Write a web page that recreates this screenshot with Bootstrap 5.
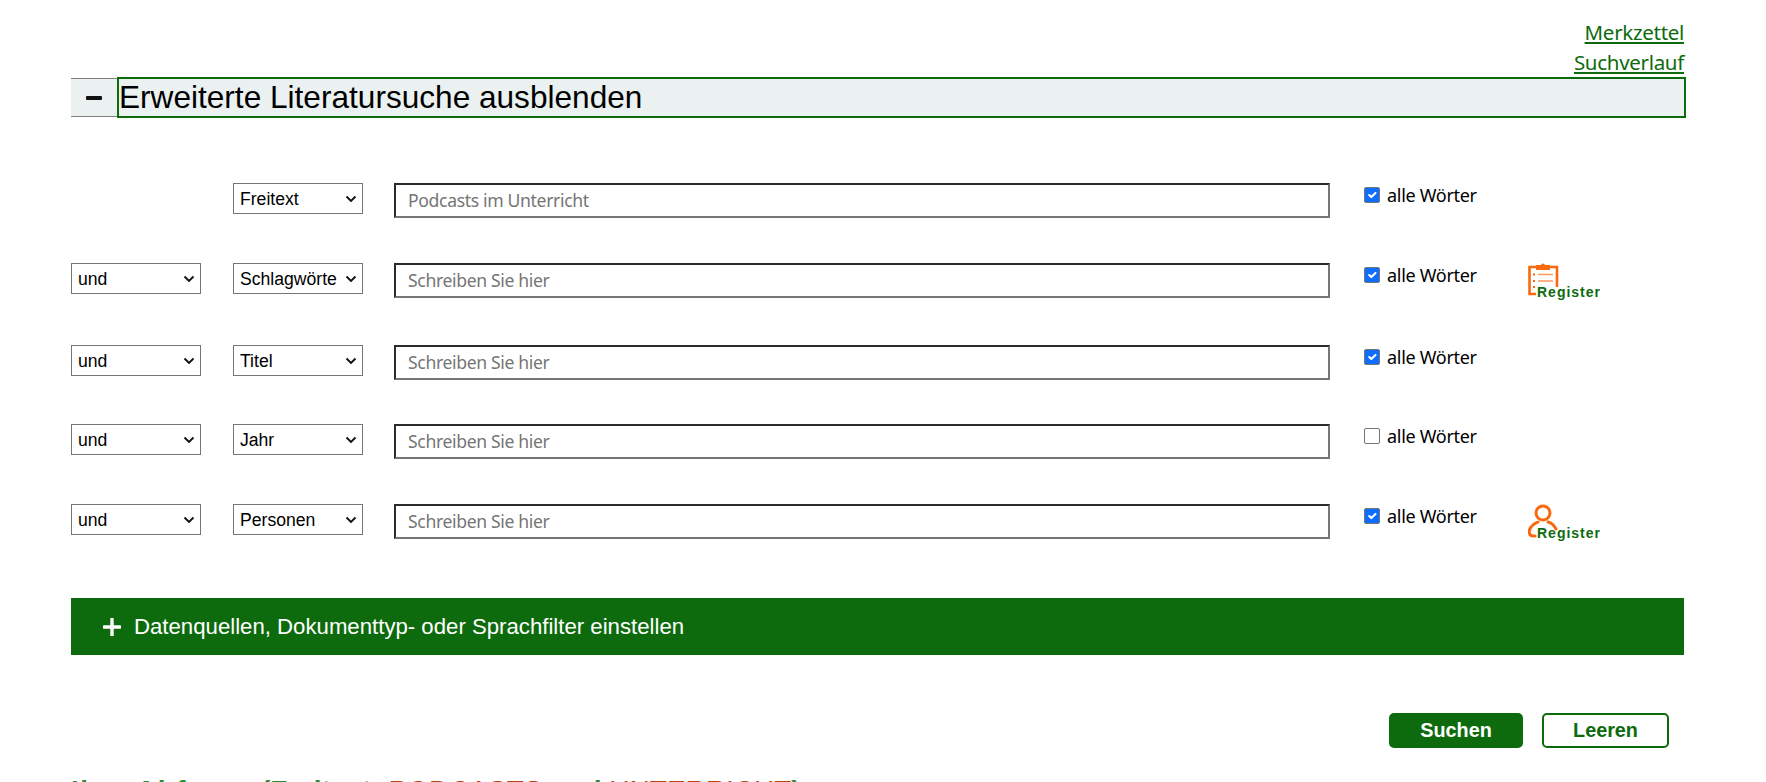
<!DOCTYPE html>
<html lang="de">
<head>
  <meta charset="UTF-8" />
  <meta name="viewport" content="width=device-width, initial-scale=1.0" />
  <title>Literatursuche</title>
  <link href="https://cdn.jsdelivr.net/npm/bootstrap@5.3.3/dist/css/bootstrap.min.css" rel="stylesheet" />
  <script src="https://cdn.jsdelivr.net/npm/bootstrap@5.3.3/dist/js/bootstrap.bundle.min.js"></script>
  <style>
    html, body { height: 782px; overflow: hidden; }
    body { font-family: "Noto Sans", sans-serif; color: #000; background: #fff; }
    .page-wrap { padding: 17px 82px 0 71px; }
    .top-links { height: 60px; font-size: 20.5px; line-height: 30px; letter-spacing: -.3px; }
    .top-links a { color: #0d6b0d; display: block; height: 30px; }
    .toggle-head { height: 41px; margin-right: -2px; }
    .toggle-btn { width: 46px; margin: 1px 0; background: #ebf1f1; border-top: 1px solid #808080; border-bottom: 1px solid #808080; }
    .toggle-btn span { width: 16px; height: 4px; background: #111; border-radius: 1px; }
    .toggle-title { background: #ebf1f1; border: 2px solid #0d6b0d; font: 31.6px/37px "Liberation Sans", sans-serif; }
    .search-rows { padding-top: 65px; }
    .search-row { height: 31px; margin-top: 49px; }
    .search-row:first-child { margin-top: 0; }
    .row-titel { margin-top: 51px; }
    .row-jahr { margin-top: 48px; }
    .sel-gap { width: 162px; flex: none; }
    .sel-box { width: 130px; height: 31px; flex: none; padding: 0 0 0 6px; border: 1px solid #767676; border-radius: 0; font: 17.6px "Liberation Sans", sans-serif; color: #000; background-image: url("data:image/svg+xml,%3csvg xmlns='http://www.w3.org/2000/svg' viewBox='0 0 12 8'%3e%3cpath fill='none' stroke='%23111' stroke-width='1.9' d='M1.5 1.5 6 6l4.5-4.5'/%3e%3c/svg%3e"); background-position: right 5px center; background-size: 12px 8px; }
    .sel-link { margin-right: 32px; }
    .sel-field { margin-right: 31px; }
    .txt-input { width: 936px; height: 35px; flex: none; padding: 0 12px 2px; border-width: 2px; border-style: solid; border-color: #2b2b2b #767676 #767676 #2b2b2b; border-radius: 0; font-size: 17.6px; letter-spacing: -.35px; }
    .txt-input::placeholder { color: #757575; opacity: 1; }
    .word-check { margin-left: 34px; width: 164px; margin-top: 1px; font-size: 18px; line-height: 22px; letter-spacing: -.3px; flex: none; }
    .word-check .form-check-input { width: 16px; height: 16px; margin: 0 7px 0 0; border-color: #767676; border-radius: 2px; flex: none; }
    .reg-link { position: relative; width: 76px; height: 40px; flex: none; }
    .reg-link svg { display: block; }
    .reg-link b { position: absolute; left: 9px; top: 21px; font: bold 14px/16px "Liberation Sans", sans-serif; letter-spacing: 1px; color: #0d6b0d; }
    .filter-bar { margin-top: 63px; height: 57px; padding-left: 32px; background: #0d6b0d; color: #fff; font: 22.2px "Liberation Sans", sans-serif; }
    .filter-bar svg { margin-right: 13px; }
    .action-row { margin-top: 58px; padding-right: 15px; }
    .act-btn { height: 35px; padding: 0; border-radius: 5px; font: bold 19.8px/1 "Liberation Sans", sans-serif; border: 2px solid #0d6b0d; }
    .act-search { width: 134px; background: #0d6b0d; color: #fff; margin-right: 19px; }
    .act-clear { width: 127px; background: #fff; color: #0d6b0d; }
    .query-title { margin-top: 28px; font: bold 28px/30px "Liberation Sans", sans-serif; color: #2e8b2e; white-space: nowrap; }
    .query-title span { letter-spacing: 1.4px; }
    .query-title em { font-style: normal; font-weight: 400; color: #b8430f; }
  </style>
</head>
<body>
  <div class="page-wrap">
    <div class="top-links text-end">
      <a href="#">Merkzettel</a>
      <a href="#">Suchverlauf</a>
    </div>

    <div class="toggle-head d-flex">
      <div class="toggle-btn d-flex align-items-center justify-content-center"><span></span></div>
      <div class="toggle-title flex-grow-1">Erweiterte Literatursuche ausblenden</div>
    </div>

    <div class="search-rows">
      <div class="search-row d-flex align-items-start">
        <div class="sel-gap"></div>
        <select class="form-select sel-box sel-field"><option>Freitext</option></select>
        <input type="text" class="form-control txt-input" placeholder="Podcasts im Unterricht" />
        <label class="word-check d-flex align-items-center"><input class="form-check-input" type="checkbox" checked />alle Wörter</label>
      </div>
      <div class="search-row d-flex align-items-start">
        <select class="form-select sel-box sel-link"><option>und</option></select>
        <select class="form-select sel-box sel-field"><option>Schlagwörte</option></select>
        <input type="text" class="form-control txt-input" placeholder="Schreiben Sie hier" />
        <label class="word-check d-flex align-items-center"><input class="form-check-input" type="checkbox" checked />alle Wörter</label>
        <a class="reg-link text-decoration-none" href="#">
          <svg width="32" height="34" viewBox="0 0 32 34" fill="none">
            <path d="M8 4H1.5V31H8M22 4H29V24" stroke="#f96a10" stroke-width="2.6"/>
            <rect x="8" y="2" width="14" height="5" fill="#f96a10"/>
            <circle cx="15" cy="2.5" r="2" fill="#f96a10"/>
            <path d="M5 11.5h2M5 18h2M5 24h2" stroke="#f96a10" stroke-width="2"/>
            <path d="M10 11.5h15M10 18h15" stroke="#fb9a5c" stroke-width="1.6"/>
          </svg>
          <b>Register</b>
        </a>
      </div>
      <div class="search-row row-titel d-flex align-items-start">
        <select class="form-select sel-box sel-link"><option>und</option></select>
        <select class="form-select sel-box sel-field"><option>Titel</option></select>
        <input type="text" class="form-control txt-input" placeholder="Schreiben Sie hier" />
        <label class="word-check d-flex align-items-center"><input class="form-check-input" type="checkbox" checked />alle Wörter</label>
      </div>
      <div class="search-row row-jahr d-flex align-items-start">
        <select class="form-select sel-box sel-link"><option>und</option></select>
        <select class="form-select sel-box sel-field"><option>Jahr</option></select>
        <input type="text" class="form-control txt-input" placeholder="Schreiben Sie hier" />
        <label class="word-check d-flex align-items-center"><input class="form-check-input" type="checkbox" />alle Wörter</label>
      </div>
      <div class="search-row d-flex align-items-start">
        <select class="form-select sel-box sel-link"><option>und</option></select>
        <select class="form-select sel-box sel-field"><option>Personen</option></select>
        <input type="text" class="form-control txt-input" placeholder="Schreiben Sie hier" />
        <label class="word-check d-flex align-items-center"><input class="form-check-input" type="checkbox" checked />alle Wörter</label>
        <a class="reg-link text-decoration-none" href="#">
          <svg width="32" height="34" viewBox="0 0 32 34" fill="none">
            <circle cx="15" cy="9" r="7" stroke="#f96a10" stroke-width="3"/>
            <path d="M7 32H5C1 32 0 27 3 23 5 20 8 19 10 18M20 18C24 19 26 21 28 25" stroke="#f96a10" stroke-width="3" stroke-linecap="round"/>
          </svg>
          <b>Register</b>
        </a>
      </div>
    </div>

    <div class="filter-bar d-flex align-items-center">
      <svg width="18" height="18" viewBox="0 0 18 18"><path d="M9 1v16M1 9h16" stroke="#fff" stroke-width="3.4" stroke-linecap="round"/></svg>
      Datenquellen, Dokumenttyp- oder Sprachfilter einstellen
    </div>

    <div class="action-row d-flex justify-content-end">
      <button class="btn act-btn act-search" type="button">Suchen</button>
      <button class="btn act-btn act-clear" type="button">Leeren</button>
    </div>

    <div class="query-title"><span>Ihre Abfrage </span>(Freitext: <em>PODCASTS</em> und <em>UNTERRICHT</em>)</div>
  </div>
</body>
</html>
